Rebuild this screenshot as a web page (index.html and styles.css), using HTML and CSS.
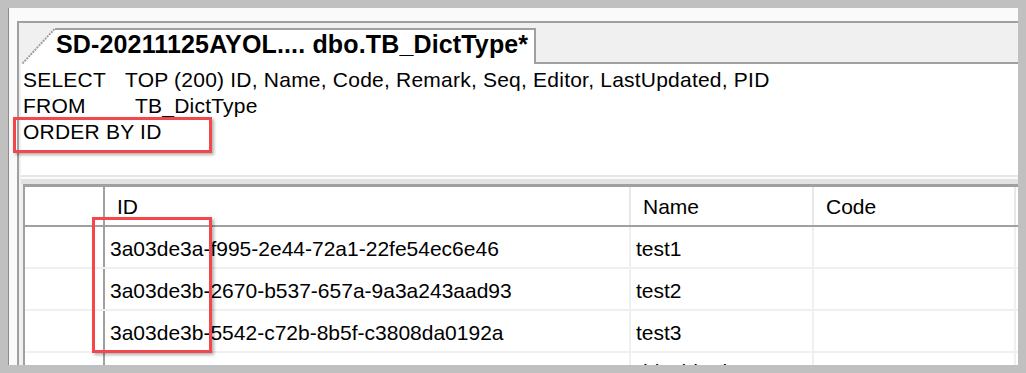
FILE: index.html
```html
<!DOCTYPE html>
<html lang="en">
<head>
    <meta charset="UTF-8">
    <title>dbo.TB_DictType</title>
    <link rel="stylesheet" href="styles.css">
</head>
<body>
    <div class="frame">
        <div class="doc">
            <div class="tabstrip">
                <svg class="tab-slant" width="33" height="36" viewBox="0 0 33 36">
                    <polygon points="0,36 33,0 33,36" fill="#ffffff"></polygon>
                    <line x1="0.5" y1="35.5" x2="33" y2="0.5" stroke="#a0a0a0" stroke-width="2" stroke-dasharray="2 1"></line>
                </svg>
                <div class="tab">SD-20211125AYOL.... dbo.TB_DictType*</div>
                <div class="tab-fill"></div>
            </div>

            <div class="editor">
                <div class="sql-line"><span class="kw kw-select">SELECT</span>TOP (200) ID, Name, Code, Remark, Seq, Editor, LastUpdated, PID</div>
                <div class="sql-line"><span class="kw kw-from">FROM</span>TB_DictType</div>
                <div class="sql-line">ORDER BY ID</div>
            </div>

            <div class="splitter"></div>

            <div class="grid">
                <div class="grid-row header-row">
                    <div class="cell row-head"></div>
                    <div class="cell">ID</div>
                    <div class="cell">Name</div>
                    <div class="cell">Code</div>
                    <div class="cell tail"></div>
                </div>
                <div class="grid-row">
                    <div class="cell row-head"></div>
                    <div class="cell">3a03de3a-f995-2e44-72a1-22fe54ec6e46</div>
                    <div class="cell">test1</div>
                    <div class="cell"></div>
                    <div class="cell tail"></div>
                </div>
                <div class="grid-row">
                    <div class="cell row-head"></div>
                    <div class="cell">3a03de3b-2670-b537-657a-9a3a243aad93</div>
                    <div class="cell">test2</div>
                    <div class="cell"></div>
                    <div class="cell tail"></div>
                </div>
                <div class="grid-row">
                    <div class="cell row-head"></div>
                    <div class="cell">3a03de3b-5542-c72b-8b5f-c3808da0192a</div>
                    <div class="cell">test3</div>
                    <div class="cell"></div>
                    <div class="cell tail"></div>
                </div>
                <div class="grid-row last-row">
                    <div class="cell row-head"></div>
                    <div class="cell"></div>
                    <div class="cell">ddTableIdx</div>
                    <div class="cell"></div>
                    <div class="cell tail"></div>
                </div>
            </div>
        </div>
    </div>

    <div class="mark mark-order"></div>
    <div class="mark mark-id"></div>
</body>
</html>
```

FILE: styles.css
```css
* {
    box-sizing: border-box;
    margin: 0;
    padding: 0;
}

html,
body {
    height: 100%;
}

body {
    background: #c0c0c0;
    padding: 8px;
    font-family: "Liberation Sans", Arial, sans-serif;
    font-size: 21px;
    color: #000;
    overflow: hidden;
}

.frame {
    height: 100%;
    background: #fafafa;
    border-left: 1px solid #8c8c8c;
    padding: 13px 0 0 8px;
    display: flex;
    flex-direction: column;
    overflow: hidden;
}

.doc {
    flex: 1;
    background: #f0f0f0;
    border-top: 2px solid #a0a0a0;
    border-left: 2px solid #a0a0a0;
    display: flex;
    flex-direction: column;
}

/* tab strip */
.tabstrip {
    height: 41px;
    padding: 5px 0 0 3px;
    display: flex;
    align-items: flex-end;
    flex-shrink: 0;
}

.tab-slant {
    display: block;
    flex-shrink: 0;
}

.tab {
    height: 36px;
    background: #fff;
    border-top: 2px solid #a0a0a0;
    border-right: 2px solid #a0a0a0;
    padding: 0 6px 5px 1px;
    font-size: 25px;
    font-weight: bold;
    line-height: 29px;
    letter-spacing: 0.15px;
    white-space: nowrap;
}

.tab-fill {
    flex: 1;
    height: 2px;
    background: #a0a0a0;
}

/* query text */
.editor {
    height: 111px;
    flex-shrink: 0;
    margin-left: 2px;
    padding: 3px 0 0 2px;
    background: #fff;
    line-height: 26px;
    letter-spacing: 0.22px;
    white-space: nowrap;
}

.kw {
    display: inline-block;
}

.kw-select {
    width: 102px;
}

.kw-from {
    width: 112px;
}

.splitter {
    height: 9px;
    flex-shrink: 0;
    margin-left: 2px;
    background: linear-gradient(#e6e6e6 0, #e6e6e6 2px, #fafafa 2px, #fafafa 4px, #e2e2e2 4px);
}

/* result grid */
.grid {
    flex: 1;
    margin-left: 4px;
    background: #fff;
    border-top: 3px solid #a0a0a0;
    border-left: 2px solid #a0a0a0;
}

.grid-row {
    display: grid;
    grid-template-columns: 80px 526px 183px 202px 1fr;
    height: 42px;
    border-bottom: 2px solid #f0f0f0;
}

.cell {
    border-right: 2px solid #f0f0f0;
    padding: 3px 0 0 5px;
    line-height: 37px;
    white-space: nowrap;
    overflow: hidden;
}

.cell.tail {
    border-right: none;
}

.cell.row-head {
    border-right-color: #a0a0a0;
}

.header-row {
    height: 40px;
    border-bottom-color: #a0a0a0;
}

.header-row .cell {
    padding: 1px 0 0 12px;
    border-right-color: #e8e8e8;
}

.header-row .cell.row-head {
    border-right-color: #a0a0a0;
}

.last-row .cell {
    padding-top: 0;
}

/* red annotation boxes */
.mark {
    position: absolute;
    border: 3px solid #f2474b;
    box-shadow: 2px 2px 3px rgba(0, 0, 0, 0.3);
}

.mark-order {
    left: 13px;
    top: 117px;
    width: 199px;
    height: 36px;
}

.mark-id {
    left: 92px;
    top: 217px;
    width: 120px;
    height: 136px;
}
```
